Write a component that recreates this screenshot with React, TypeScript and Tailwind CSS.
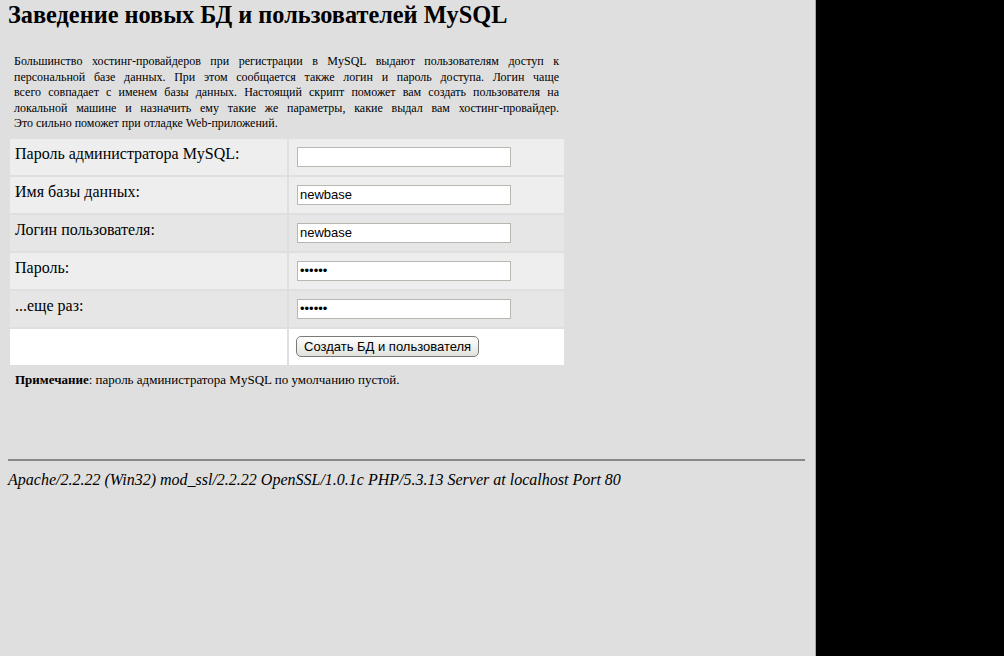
const serif = { fontFamily: '"Liberation Serif", "Times New Roman", serif' };

const rows = [
  { label: 'Пароль администратора MySQL:', type: 'password', value: '', bg: 'bg-[#eeeeee]' },
  { label: 'Имя базы данных:', type: 'text', value: 'newbase', bg: 'bg-[#eeeeee]' },
  { label: 'Логин пользователя:', type: 'text', value: 'newbase', bg: 'bg-[#e6e6e6]' },
  { label: 'Пароль:', type: 'password', value: 'qwerty', bg: 'bg-[#eeeeee]' },
  { label: '...еще раз:', type: 'password', value: 'qwerty', bg: 'bg-[#e6e6e6]' },
];

const intro = [
  'Большинство хостинг-провайдеров при регистрации в MySQL выдают пользователям доступ к',
  'персональной базе данных. При этом сообщается также логин и пароль доступа. Логин чаще',
  'всего совпадает с именем базы данных. Настоящий скрипт поможет вам создать пользователя на',
  'локальной машине и назначить ему такие же параметры, какие выдал вам хостинг-провайдер.',
];

export default function App() {
  return (
    <div className="flex h-[656px] w-[1004px] overflow-hidden bg-black">
      <div
        className="flex w-[816px] shrink-0 flex-col border-r border-[#a8a8a8] bg-[#dfdfdf] px-[8px] pt-[1px] text-black"
        style={serif}
      >
        <h1 className="m-0 text-[24.3px] font-bold leading-[28px]">Заведение новых БД и пользователей MySQL</h1>

        <div className="mt-[25px] w-[551px] pl-[6px] text-[12px] leading-[15.6px]">
          {intro.map((line) => (
            <div key={line} className="text-justify [text-align-last:justify]">
              {line}
            </div>
          ))}
          <div>Это сильно поможет при отладке Web-приложений.</div>
        </div>

        <table className="mt-[5px] w-[558px] border-separate border-spacing-[2px]">
          <tbody>
            {rows.map((r) => (
              <tr key={r.label}>
                <td className={`${r.bg} h-[36px] w-[277px] px-[5px] pt-[6px] align-top text-[16px] leading-[18px]`}>
                  {r.label}
                </td>
                <td className={`${r.bg} h-[36px] px-[8px] align-middle`}>
                  <input
                    type={r.type}
                    defaultValue={r.value}
                    className="block h-[20px] w-[214px] border border-[#b8b8b0] bg-white px-[2px] text-[13px] text-black outline-none"
                    style={{ fontFamily: '"Liberation Sans", Arial, sans-serif' }}
                  />
                </td>
              </tr>
            ))}
            <tr>
              <td className="h-[36px] bg-white" />
              <td className="h-[36px] bg-white px-[7px] align-middle">
                <button
                  type="button"
                  className="block h-[21px] rounded-[5px] border border-[#7a7a7a] bg-gradient-to-b from-white to-[#e2e2dc] px-[7px] text-[13px] leading-[18px] text-black"
                  style={{ fontFamily: '"Liberation Sans", Arial, sans-serif' }}
                >
                  Создать БД и пользователя
                </button>
              </td>
            </tr>
          </tbody>
        </table>

        <p className="mt-[5px] pl-[7px] text-[13px] leading-[16px]">
          <b>Примечание</b>: пароль администратора MySQL по умолчанию пустой.
        </p>

        <hr className="mt-[71px] h-[2px] w-[797px] border-0 bg-[#888888]" />

        <address className="mt-[9px] text-[16px] italic leading-[20px]">
          Apache/2.2.22 (Win32) mod_ssl/2.2.22 OpenSSL/1.0.1c PHP/5.3.13 Server at localhost Port 80
        </address>
      </div>
      <div className="flex-1 bg-black" />
    </div>
  );
}
